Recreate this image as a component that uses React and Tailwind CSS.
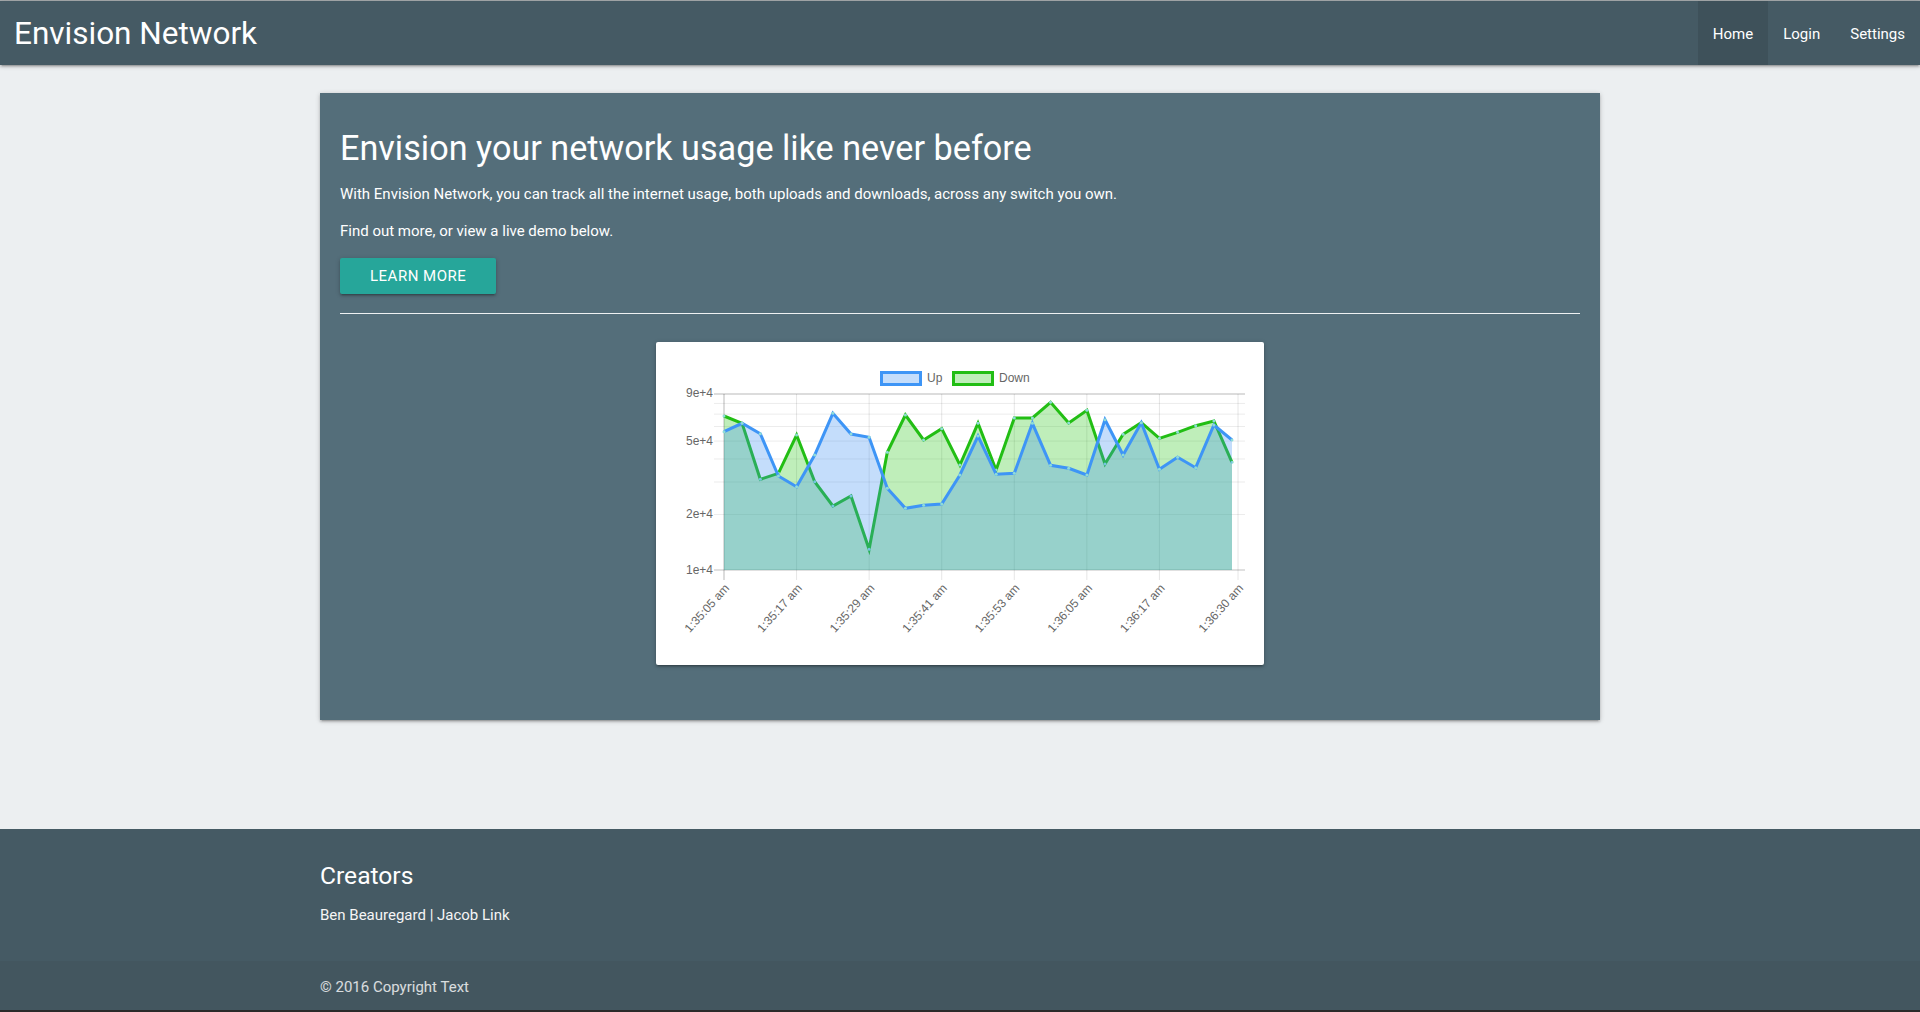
import React from "react";

const UP = [290,265,296,423,455,360,235,297,307,460,520,511,507,420,303,418,415,265,391,400,420,254,360,263,403,367,398,270,315];
const DOWN = [243,265,433,415,300,440,513,483,643,352,240,315,281,390,265,405,249,249,202,264,226,387,298,263,310,292,272,258,382];

const X0 = 68;
const DX = 18.143;
const TOP = 52;
const BOT = 228;
const RIGHT = 589;

const px = (i) => X0 + i * DX;
const py = (zy) => zy / 3 - 7;
const logY = (v) => TOP + ((Math.log10(9e4) - Math.log10(v)) / (Math.log10(9e4) - 4)) * (BOT - TOP);

function series(arr) {
  const pts = arr.map((zy, i) => [px(i), py(zy)]);
  const line = pts.map(([x, y], i) => `${i ? "L" : "M"}${x.toFixed(1)},${y.toFixed(1)}`).join(" ");
  const area = `${line} L${pts[pts.length - 1][0].toFixed(1)},${BOT} L${X0},${BOT} Z`;
  return { pts, line, area };
}

const TICKS = ["1:35:05 am","1:35:17 am","1:35:29 am","1:35:41 am","1:35:53 am","1:36:05 am","1:36:17 am","1:36:30 am"];
const TICK_X = [0,12,24,36,48,60,72,85].map((s) => X0 + s * 6.0476);

function Chart() {
  const up = series(UP);
  const down = series(DOWN);
  const hVals = [1e4,2e4,3e4,4e4,5e4,6e4,7e4,8e4,9e4];
  return (
    <svg width="608" height="323" viewBox="0 0 608 323" fontFamily="Liberation Sans, Arial, Helvetica, sans-serif">
      <rect x="225.5" y="30.5" width="39" height="12" fill="rgba(58,142,242,0.3)" stroke="#3e95f6" strokeWidth="3" />
      <text x="271" y="36" fontSize="12" fill="#666" dominantBaseline="central">Up</text>
      <rect x="297.5" y="30.5" width="39" height="12" fill="rgba(42,198,28,0.3)" stroke="#22be14" strokeWidth="3" />
      <text x="343" y="36" fontSize="12" fill="#666" dominantBaseline="central">Down</text>

      {hVals.map((v) => {
        const y = logY(v);
        const isTop = v === 9e4;
        const isBot = v === 1e4;
        return (
          <line key={v} x1="58" x2={RIGHT} y1={y} y2={y}
            stroke={isTop ? "rgba(0,0,0,0.28)" : isBot ? "rgba(0,0,0,0.12)" : "rgba(0,0,0,0.08)"}
            strokeWidth={isBot ? 2 : 1} />
        );
      })}
      {TICK_X.map((x, i) => (
        <line key={i} x1={x} x2={x} y1={TOP} y2={BOT + 10}
          stroke={i === 0 ? "rgba(0,0,0,0.28)" : "rgba(0,0,0,0.1)"} strokeWidth="1" />
      ))}

      {[[9e4,"9e+4"],[5e4,"5e+4"],[2e4,"2e+4"],[1e4,"1e+4"]].map(([v, t]) => (
        <text key={t} x="57" y={logY(v) - (v === 9e4 ? 1.5 : 0)} fontSize="12" fill="#666" textAnchor="end" dominantBaseline="central">{t}</text>
      ))}

      {TICKS.map((t, i) => (
        <text key={t} transform={`translate(${(TICK_X[i] + 3).toFixed(1)},244) rotate(-48)`} fontSize="12" fill="#666" textAnchor="end" dominantBaseline="central">{t}</text>
      ))}

      <path d={down.area} fill="rgba(42,198,28,0.3)" />
      <path d={down.line} fill="none" stroke="#22be14" strokeWidth="3" strokeLinejoin="miter" />
      {down.pts.map(([x, y], i) => (
        <circle key={"d" + i} cx={x} cy={y} r="1.5" fill="#8fdcd8" />
      ))}

      <path d={up.area} fill="rgba(58,142,242,0.3)" />
      <path d={up.line} fill="none" stroke="#3e95f6" strokeWidth="3" strokeLinejoin="miter" />
      {up.pts.map(([x, y], i) => (
        <circle key={"u" + i} cx={x} cy={y} r="1.5" fill="#8fdcd8" />
      ))}
    </svg>
  );
}

const z1 = "shadow-[0_2px_2px_0_rgba(0,0,0,0.14),0_3px_1px_-2px_rgba(0,0,0,0.12),0_1px_5px_0_rgba(0,0,0,0.2)]";

export default function App() {
  return (
    <div className="min-h-[1012px] bg-[#eceff1] font-[Roboto,sans-serif] flex flex-col">
      <div className="h-px bg-[#a8acae]" />
      <nav className={`h-[64px] bg-[#455a64] flex items-stretch justify-between text-white relative z-10 ${z1}`}>
        <div className="pl-[14px] pt-[2px] text-[31.5px] leading-[62px] whitespace-nowrap">Envision Network</div>
        <ul className="flex items-stretch text-[15px]">
          <li className="px-[15px] pt-[2px] leading-[62px] bg-[#3e515a]">Home</li>
          <li className="px-[15px] pt-[2px] leading-[62px]">Login</li>
          <li className="px-[15px] pt-[2px] leading-[62px]">Settings</li>
        </ul>
      </nav>

      <main className="pt-[28px] pb-[109px]">
        <div className={`w-[1280px] h-[627px] mx-auto bg-[#546e7a] text-white ${z1}`}>
          <div className="px-[20px] pt-[37px]">
            <h4 className="text-[34.2px] leading-[37.6px] font-normal">Envision your network usage like never before</h4>
            <p className="mt-[15px] text-[15px] leading-[22.5px]">With Envision Network, you can track all the internet usage, both uploads and downloads, across any switch you own.</p>
            <p className="mt-[15px] text-[15px] leading-[22.5px]">Find out more, or view a live demo below.</p>
            <button className={`mt-[15px] h-[36px] px-[30px] bg-[#26a69a] text-white text-[15px] leading-[36px] tracking-[0.5px] uppercase rounded-[2px] ${z1}`}>Learn more</button>
            <div className="mt-[19px] h-px bg-[#eef1f2]" />
            <div className={`mt-[28px] mx-auto w-[608px] h-[323px] bg-white rounded-[2px] ${z1}`}>
              <Chart />
            </div>
          </div>
        </div>
      </main>

      <footer className="bg-[#455a64] text-white">
        <div className="h-[132px]">
          <div className="w-[1280px] mx-auto pt-[21px]">
            <h5 className="mt-[12.3px] text-[24.6px] leading-[27px] font-normal">Creators</h5>
            <p className="mt-[15px] text-[15px] leading-[22.5px] text-[#f5f5f5]">Ben Beauregard | Jacob Link</p>
          </div>
        </div>
        <div className="h-[49px] bg-[#43565f]">
          <div className="w-[1280px] mx-auto pt-[1px] text-[15px] leading-[50px] text-white/80">© 2016 Copyright Text</div>
        </div>
        <div className="h-[2px] bg-[#2a2a2a]" />
      </footer>
    </div>
  );
}
